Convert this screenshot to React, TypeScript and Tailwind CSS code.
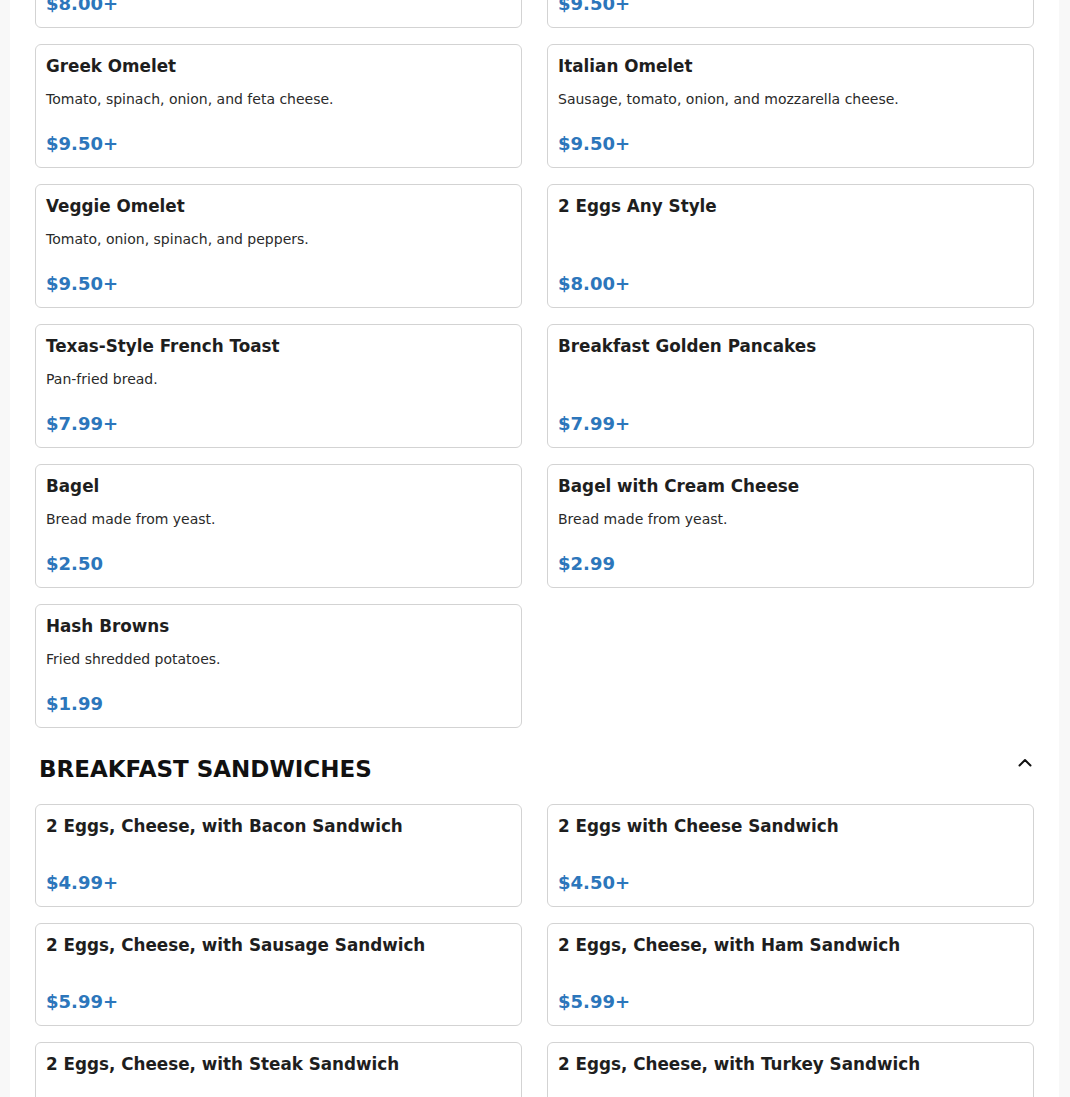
import React from "react";

type Item = { name: string; desc?: string; price: string };

const breakfast: Item[] = [
  { name: "Cheese Omelet", desc: "Eggs with American cheese.", price: "$8.00+" },
  { name: "Western Omelet", desc: "Ham, onion, and peppers.", price: "$9.50+" },
  { name: "Greek Omelet", desc: "Tomato, spinach, onion, and feta cheese.", price: "$9.50+" },
  { name: "Italian Omelet", desc: "Sausage, tomato, onion, and mozzarella cheese.", price: "$9.50+" },
  { name: "Veggie Omelet", desc: "Tomato, onion, spinach, and peppers.", price: "$9.50+" },
  { name: "2 Eggs Any Style", price: "$8.00+" },
  { name: "Texas-Style French Toast", desc: "Pan-fried bread.", price: "$7.99+" },
  { name: "Breakfast Golden Pancakes", price: "$7.99+" },
  { name: "Bagel", desc: "Bread made from yeast.", price: "$2.50" },
  { name: "Bagel with Cream Cheese", desc: "Bread made from yeast.", price: "$2.99" },
  { name: "Hash Browns", desc: "Fried shredded potatoes.", price: "$1.99" },
];

const sandwiches: Item[] = [
  { name: "2 Eggs, Cheese, with Bacon Sandwich", price: "$4.99+" },
  { name: "2 Eggs with Cheese Sandwich", price: "$4.50+" },
  { name: "2 Eggs, Cheese, with Sausage Sandwich", price: "$5.99+" },
  { name: "2 Eggs, Cheese, with Ham Sandwich", price: "$5.99+" },
  { name: "2 Eggs, Cheese, with Steak Sandwich", price: "$5.99+" },
  { name: "2 Eggs, Cheese, with Turkey Sandwich", price: "$5.99+" },
];

function Card({ item }: { item: Item }) {
  return (
    <div className="flex flex-col rounded-[6px] border border-[#d3d3d3] bg-white px-[10px] pt-[11px] pb-[10px]">
      <div className="text-[16.8px] font-bold leading-[20px] text-[#1e1e1e]">{item.name}</div>
      <p className="mt-[13px] text-[14px] leading-[20px] text-[#2a2a2a] empty:mt-[12px] empty:h-0 empty:leading-none">
        {item.desc ?? ""}
      </p>
      <div className="mt-auto pt-[22px] text-[18px] font-bold leading-[26px] text-[#2c76bb]">{item.price}</div>
    </div>
  );
}

export default function App() {
  return (
    <div
      className="min-h-screen overflow-hidden bg-[#f8f8f8]"
      style={{ fontFamily: '"DejaVu Sans", Verdana, sans-serif' }}
    >
      <div className="-mt-[96px] ml-[10px] w-[1049px] bg-white px-[25px] pb-10">
        <div className="grid grid-cols-2 gap-x-[25px] gap-y-[16px]">
          {breakfast.map((it) => (
            <Card key={it.name} item={it} />
          ))}
        </div>
        <div className="mt-[25px] mb-[19px] flex items-center justify-between pl-[4px] pr-[2px]">
          <h2 className="text-[23px] font-bold leading-[32px] text-[#111]">BREAKFAST SANDWICHES</h2>
          <svg
            width="14"
            height="9"
            viewBox="0 0 14 9"
            fill="none"
            stroke="#111"
            strokeWidth="2"
            strokeLinecap="round"
            strokeLinejoin="round"
            className="-mt-[14px]"
          >
            <path d="M1.5 7.5L7 2l5.5 5.5" />
          </svg>
        </div>
        <div className="grid grid-cols-2 gap-x-[25px] gap-y-[16px]">
          {sandwiches.map((it) => (
            <Card key={it.name} item={it} />
          ))}
        </div>
      </div>
    </div>
  );
}
